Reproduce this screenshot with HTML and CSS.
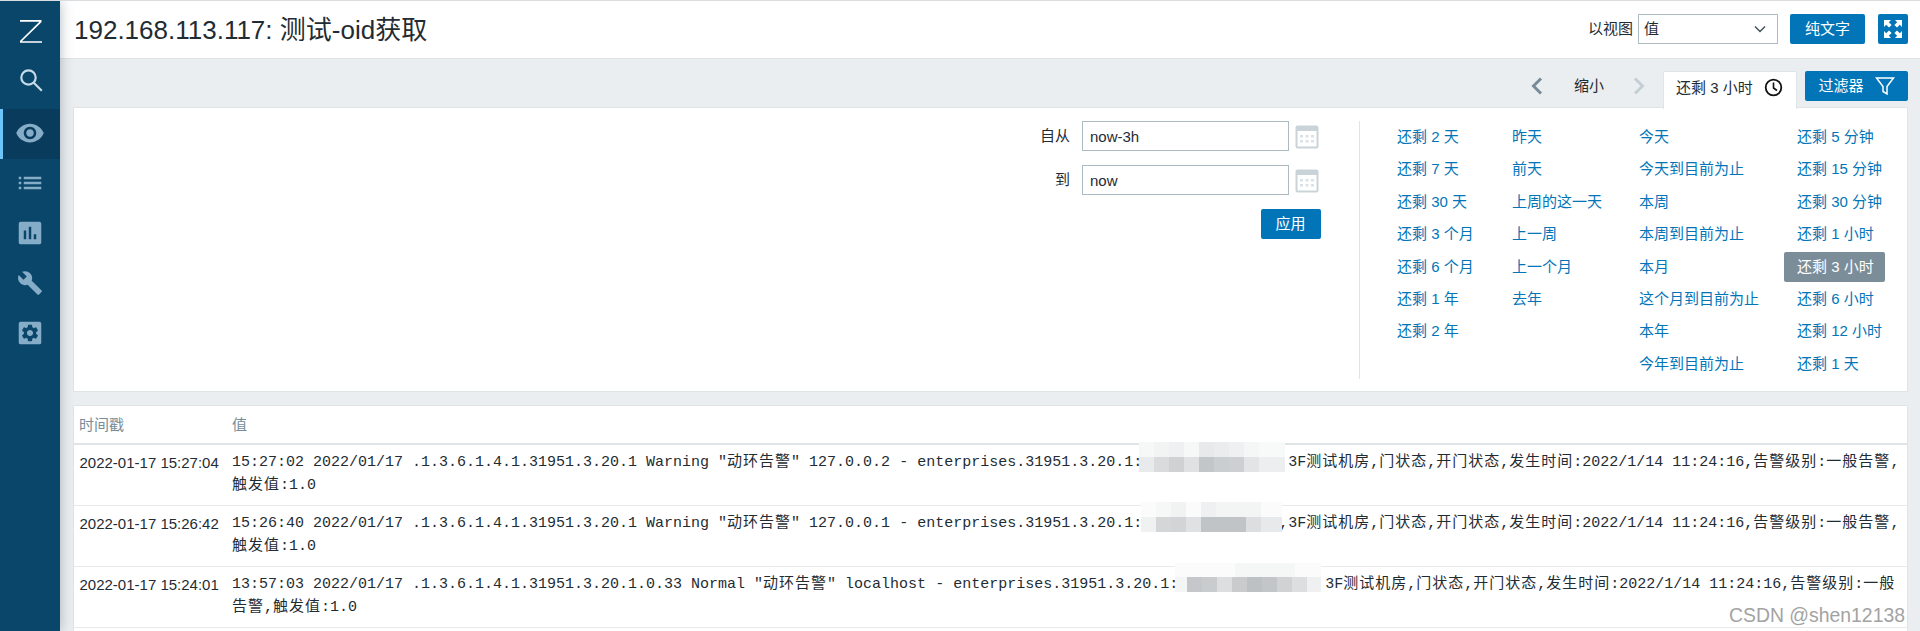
FILE: index.html
```html
<!DOCTYPE html>
<html lang="zh-CN">
<head>
<meta charset="utf-8">
<title>192.168.113.117: 测试-oid获取</title>
<link rel="stylesheet" href="styles.css">
</head>
<body>
<aside class="sidebar">
  <a class="nav-logo"><svg width="30" height="30" viewBox="0 0 30 30"><path d="M5 4.800H26.500M26 5.300L5.500 25.500M5 26H27" fill="none" stroke="#fff" stroke-width="1.700"/></svg></a>
  <a class="nav-search"><svg width="24" height="24" viewBox="0 0 24 24"><circle cx="9.500" cy="9.500" r="7.200" fill="none" stroke="#c6dbe8" stroke-width="2.200"/><path d="M14.500 14.500L22.800 22.800" fill="none" stroke="#c6dbe8" stroke-width="2.200"/></svg></a>
  <a class="nav-item active"><svg width="30" height="30" viewBox="0 0 24 24"><path d="M12 4.500C7 4.500 2.730 7.610 1 12c1.730 4.390 6 7.500 11 7.500s9.270-3.110 11-7.500c-1.730-4.390-6-7.500-11-7.500zM12 17c-2.760 0-5-2.240-5-5s2.240-5 5-5 5 2.240 5 5-2.240 5-5 5zm0-8c-1.660 0-3 1.340-3 3s1.340 3 3 3 3-1.340 3-3-1.340-3-3-3z"/></svg></a>
  <a class="nav-item"><svg width="30" height="30" viewBox="0 0 24 24"><path d="M3 13h2v-2H3v2zm0 4h2v-2H3v2zm0-8h2V7H3v2zm4 4h14v-2H7v2zm0 4h14v-2H7v2zM7 7v2h14V7H7z"/></svg></a>
  <a class="nav-item"><svg width="30" height="30" viewBox="0 0 24 24"><path d="M19.500 3h-15C3.700 3 3 3.700 3 4.500v15c0 .8.700 1.500 1.500 1.500h15c.8 0 1.500-.7 1.500-1.500v-15c0-.8-.7-1.500-1.500-1.500zM9 17H7v-7h2v7zm4 0h-2V7h2v10zm4 0h-2v-4h2v4z"/></svg></a>
  <a class="nav-item"><svg width="26" height="26" viewBox="0 0 24 24"><path d="M22.700 19l-9.100-9.100c.9-2.300.4-5-1.500-6.900-2-2-5-2.400-7.400-1.300L9 6 6 9 1.600 4.700C.4 7.100.9 10.100 2.900 12.100c1.900 1.900 4.600 2.400 6.900 1.500l9.100 9.100c.4.4 1 .4 1.400 0l2.300-2.300c.5-.4.5-1.100.1-1.400z"/></svg></a>
  <a class="nav-item"><svg width="30" height="30" viewBox="0 0 24 24"><rect x="3" y="3" width="18" height="18" rx="1.500"/><path class="gear" transform="translate(12 12) scale(.68) translate(-12 -12)" d="M19.140 12.940c.04-.3.06-.61.06-.94 0-.32-.02-.64-.07-.94l2.030-1.580c.18-.14.23-.41.12-.61l-1.920-3.320c-.12-.22-.37-.29-.59-.22l-2.390.96c-.5-.38-1.030-.7-1.620-.94l-.36-2.540c-.04-.24-.24-.41-.48-.41h-3.840c-.24 0-.43.17-.47.41l-.36 2.540c-.59.24-1.130.57-1.620.94l-2.390-.96c-.22-.08-.47 0-.59.22L2.740 8.870c-.12.21-.08.47.12.61l2.030 1.580c-.05.3-.09.63-.09.94s.02.64.07.94l-2.030 1.580c-.18.14-.23.41-.12.61l1.920 3.320c.12.22.37.29.59.22l2.390-.96c.5.38 1.030.7 1.620.94l.36 2.540c.05.24.24.41.48.41h3.840c.24 0 .44-.17.47-.41l.36-2.540c.59-.24 1.130-.56 1.620-.94l2.390.96c.22.08.47 0 .59-.22l1.920-3.320c.12-.22.07-.47-.12-.61l-2.010-1.580zM12 15.600c-1.980 0-3.600-1.620-3.600-3.600s1.620-3.600 3.600-3.600 3.600 1.620 3.600 3.600-1.620 3.600-3.600 3.600z"/></svg></a>
</aside>
<main class="main">
  <header class="header">
    <h1 class="title">192.168.113.117: 测试-oid获取</h1>
    <div class="controls">
      <span class="view-label">以视图</span>
      <div class="select"><span>值</span><svg width="12" height="8" viewBox="0 0 12 8"><path d="M1 1.500L6 6.500L11 1.500" fill="none" stroke="#3a4a52" stroke-width="1.300"/></svg></div>
      <button class="btn btn-text">纯文字</button>
      <button class="btn btn-full"><svg width="20" height="20" viewBox="0 0 20 20"><path d="M1 1h7L5.800 3.200 8.600 6 6 8.600 3.200 5.800 1 8zM19 1v7l-2.200-2.200L14 8.600 11.400 6 14.200 3.200 12 1zM1 19v-7l2.200 2.200L6 11.400 8.600 14 5.800 16.800 8 19zM19 19h-7l2.200-2.200L11.400 14 14 11.400l2.800 2.800L19 12z" fill="#fff"/></svg></button>
    </div>
  </header>
  <nav class="tabs">
    <svg class="chev" width="14" height="20" viewBox="0 0 14 20"><path d="M11 2.500L3.500 10L11 17.500" fill="none" stroke="#768d99" stroke-width="3"/></svg>
    <span class="zoom-out">缩小</span>
    <svg class="chev chev-next" width="14" height="20" viewBox="0 0 14 20"><path d="M3 2.500L10.500 10L3 17.500" fill="none" stroke="#c4cfd5" stroke-width="3"/></svg>
    <div class="tab"><span>还剩 3 小时</span><svg width="19" height="19" viewBox="0 0 19 19"><circle cx="9.500" cy="9.500" r="7.800" fill="none" stroke="#111" stroke-width="1.800"/><path d="M9.500 4.500V10L13 12.500" fill="none" stroke="#111" stroke-width="1.600"/></svg></div>
    <button class="btn btn-filter"><span>过滤器</span><svg width="20" height="20" viewBox="0 0 20 20"><path d="M1.500 2H18.500L12 10.500V18L8 15.500V10.500Z" fill="none" stroke="#fff" stroke-width="1.500"/></svg></button>
  </nav>
  <section class="panel filter">
    <div class="range">
      <div class="range-row">
        <label class="range-label">自从</label><input class="range-input" value="now-3h">
        <svg class="cal" width="24" height="24" viewBox="0 0 24 24"><rect x="0.500" y="0.500" width="23" height="23" rx="2" fill="#c9d3d8"/><rect x="2.500" y="6" width="19" height="15.500" fill="#fff"/><path d="M5 10h3v2.500H5zM10.500 10h3v2.500h-3zM16 10h3v2.500h-3zM5 15h3v2.500H5zM10.500 15h3v2.500h-3zM16 15h3v2.500h-3z" fill="#dbe2e6"/></svg>
      </div>
      <div class="range-row">
        <label class="range-label">到</label><input class="range-input" value="now">
        <svg class="cal" width="24" height="24" viewBox="0 0 24 24"><rect x="0.500" y="0.500" width="23" height="23" rx="2" fill="#c9d3d8"/><rect x="2.500" y="6" width="19" height="15.500" fill="#fff"/><path d="M5 10h3v2.500H5zM10.500 10h3v2.500h-3zM16 10h3v2.500h-3zM5 15h3v2.500H5zM10.500 15h3v2.500h-3zM16 15h3v2.500h-3z" fill="#dbe2e6"/></svg>
      </div>
      <div class="range-apply"><button class="btn btn-apply">应用</button></div>
    </div>
    <div class="quick">
      <ul class="col col-1">
        <li><a>还剩 2 天</a></li><li><a>还剩 7 天</a></li><li><a>还剩 30 天</a></li><li><a>还剩 3 个月</a></li><li><a>还剩 6 个月</a></li><li><a>还剩 1 年</a></li><li><a>还剩 2 年</a></li>
      </ul>
      <ul class="col col-2">
        <li><a>昨天</a></li><li><a>前天</a></li><li><a>上周的这一天</a></li><li><a>上一周</a></li><li><a>上一个月</a></li><li><a>去年</a></li>
      </ul>
      <ul class="col col-3">
        <li><a>今天</a></li><li><a>今天到目前为止</a></li><li><a>本周</a></li><li><a>本周到目前为止</a></li><li><a>本月</a></li><li><a>这个月到目前为止</a></li><li><a>本年</a></li><li><a>今年到目前为止</a></li>
      </ul>
      <ul class="col col-4">
        <li><a>还剩 5 分钟</a></li><li><a>还剩 15 分钟</a></li><li><a>还剩 30 分钟</a></li><li><a>还剩 1 小时</a></li><li><a class="selected">还剩 3 小时</a></li><li><a>还剩 6 小时</a></li><li><a>还剩 12 小时</a></li><li><a>还剩 1 天</a></li>
      </ul>
    </div>
  </section>
  <section class="panel results">
    <table class="table">
      <thead><tr><th class="c-time">时间戳</th><th>值</th></tr></thead>
      <tbody>
        <tr>
          <td>2022-01-17 15:27:04</td>
          <td class="mono">15:27:02 2022/01/17 .1.3.6.1.4.1.31951.3.20.1 Warning "<span class="cn">动环告警</span>" 127.0.0.2 - enterprises.31951.3.20.1:<span class="mask mask-1"><svg width="146" height="30" shape-rendering="crispEdges"><rect width="146" height="30" fill="#fafafa"/><g><rect x="0" width="15" height="15" fill="#f6f7f7"/><rect x="15" width="15" height="15" fill="#f2f3f3"/><rect x="30" width="15" height="15" fill="#eff0f1"/><rect x="45" width="15" height="15" fill="#f6f7f7"/><rect x="60" width="15" height="15" fill="#e8e9ea"/><rect x="75" width="15" height="15" fill="#ebeced"/><rect x="90" width="15" height="15" fill="#eff0f1"/><rect x="105" width="15" height="15" fill="#f5f6f6"/><rect x="120" width="26" height="15" fill="#f8f9f9"/><rect x="0" y="15" width="15" height="15" fill="#e9eaeb"/><rect x="15" y="15" width="15" height="15" fill="#d9dbdc"/><rect x="30" y="15" width="15" height="15" fill="#cfd1d3"/><rect x="45" y="15" width="15" height="15" fill="#dfe1e2"/><rect x="60" y="15" width="15" height="15" fill="#c3c6c8"/><rect x="75" y="15" width="15" height="15" fill="#cbced0"/><rect x="90" y="15" width="15" height="15" fill="#cdd0d2"/><rect x="105" y="15" width="15" height="15" fill="#e2e4e5"/><rect x="120" y="15" width="26" height="15" fill="#eceeef"/></g></svg></span>,3F<span class="cn">测试机房</span>,<span class="cn">门状态</span>,<span class="cn">开门状态</span>,<span class="cn">发生时间</span>:2022/1/14 11:24:16,<span class="cn">告警级别</span>:<span class="cn">一般告警</span>,<br><span class="cn">触发值</span>:1.0</td>
        </tr>
        <tr>
          <td>2022-01-17 15:26:42</td>
          <td class="mono">15:26:40 2022/01/17 .1.3.6.1.4.1.31951.3.20.1 Warning "<span class="cn">动环告警</span>" 127.0.0.1 - enterprises.31951.3.20.1:<span class="mask mask-2"><svg width="141" height="30" shape-rendering="crispEdges"><rect width="141" height="30" fill="#fbfbfb"/><rect x="15" width="15" height="15" fill="#f6f7f7"/><rect x="30" width="15" height="15" fill="#f1f2f2"/><rect x="60" width="15" height="15" fill="#eff0f1"/><rect x="75" width="45" height="15" fill="#f3f4f4"/><rect x="0" y="15" width="15" height="15" fill="#f0f1f1"/><rect x="15" y="15" width="15" height="15" fill="#d4d6d8"/><rect x="30" y="15" width="15" height="15" fill="#d2d4d6"/><rect x="45" y="15" width="15" height="15" fill="#dfe1e2"/><rect x="60" y="15" width="45" height="15" fill="#c1c4c6"/><rect x="105" y="15" width="15" height="15" fill="#dcdedf"/><rect x="120" y="15" width="21" height="15" fill="#e8e9ea"/></svg></span>,3F<span class="cn">测试机房</span>,<span class="cn">门状态</span>,<span class="cn">开门状态</span>,<span class="cn">发生时间</span>:2022/1/14 11:24:16,<span class="cn">告警级别</span>:<span class="cn">一般告警</span>,<br><span class="cn">触发值</span>:1.0</td>
        </tr>
        <tr>
          <td>2022-01-17 15:24:01</td>
          <td class="mono">13:57:03 2022/01/17 .1.3.6.1.4.1.31951.3.20.1.0.33 Normal "<span class="cn">动环告警</span>" localhost - enterprises.31951.3.20.1:<span class="mask mask-3"><svg width="146" height="29" shape-rendering="crispEdges"><rect width="146" height="29" fill="#fbfbfb"/><rect x="60" width="60" height="14" fill="#f5f6f6"/><rect x="0" y="14" width="12" height="15" fill="#f4f5f5"/><rect x="12" y="14" width="15" height="15" fill="#c5c8ca"/><rect x="27" y="14" width="15" height="15" fill="#c9cccd"/><rect x="42" y="14" width="15" height="15" fill="#dcdedf"/><rect x="57" y="14" width="15" height="15" fill="#c9cbcd"/><rect x="72" y="14" width="15" height="15" fill="#bec1c3"/><rect x="87" y="14" width="15" height="15" fill="#c3c6c8"/><rect x="102" y="14" width="15" height="15" fill="#d0d2d4"/><rect x="117" y="14" width="15" height="15" fill="#dcdedf"/><rect x="132" y="14" width="14" height="15" fill="#eff0f1"/></svg></span>3F<span class="cn">测试机房</span>,<span class="cn">门状态</span>,<span class="cn">开门状态</span>,<span class="cn">发生时间</span>:2022/1/14 11:24:16,<span class="cn">告警级别</span>:<span class="cn">一般</span><br><span class="cn">告警</span>,<span class="cn">触发值</span>:1.0</td>
        </tr>
      </tbody>
    </table>
    <div class="watermark">CSDN @shen12138</div>
  </section>
</main>
</body>
</html>
```
FILE: styles.css
```css
* { box-sizing: border-box; }
html, body { margin: 0; height: 100%; overflow: hidden; }
body {
  display: flex;
  background: #ebeef0;
  color: #1f2c33;
  font: 15px/1.2 "Liberation Sans", "Noto Sans CJK SC", sans-serif;
  border-top: 1px solid #d9dde0;
}
a { color: inherit; text-decoration: none; }
ul { list-style: none; margin: 0; padding: 0; }
button { font: inherit; border: 0; padding: 0; }

.sidebar {
  flex: 0 0 60px;
  background: #0a466a;
  box-shadow: 0 0 12px rgba(40, 60, 75, .35);
  position: relative;
  z-index: 2;
  display: flex;
  flex-direction: column;
}
.sidebar a { display: flex; align-items: center; justify-content: center; }
.nav-logo { height: 49px; padding-top: 10px; }
.nav-search { height: 59px; padding-left: 1px; padding-top: 1px; }
.nav-item { height: 50px; padding-bottom: 3px; }
.nav-item svg { fill: #86adc8; }
.nav-item .gear { fill: #0a466a; }
.nav-item.active { background: #093c5c; border-left: 3px solid #6cc4fb; padding-right: 3px; }

.main { flex: 1; min-width: 0; display: flex; flex-direction: column; }

.header {
  height: 58px;
  flex: none;
  background: #fff;
  border-bottom: 1px solid #dfe4e7;
  display: flex;
  justify-content: space-between;
  align-items: flex-start;
  padding: 0 12px 0 14px;
}
.title { margin: 0; font-size: 26px; font-weight: 400; line-height: 59px; color: #1f2c33; }
.controls { display: flex; align-items: center; height: 30px; margin-top: 13px; }
.view-label { margin-right: 5px; }
.select {
  width: 140px;
  height: 30px;
  border: 1px solid #acbbc2;
  display: flex;
  align-items: center;
  justify-content: space-between;
  padding: 0 11px 0 5px;
  margin-right: 12px;
}
.btn { background: #0275b8; color: #fff; border-radius: 2px; height: 30px; display: flex; align-items: center; justify-content: center; }
.btn-text { width: 75px; margin-right: 13px; }
.btn-full { width: 30px; }

.tabs {
  height: 48px;
  flex: none;
  display: flex;
  justify-content: flex-end;
  align-items: flex-start;
  padding: 12px 12px 0 0;
  position: relative;
  z-index: 1;
}
.chev { margin-top: 5px; }
.zoom-out { line-height: 30px; width: 31px; margin: 0 27px 0 30px; white-space: nowrap; }
.chev-next { margin-right: 17px; }
.tab {
  width: 134px;
  height: 38px;
  margin-bottom: -2px;
  background: #fff;
  border: 1px solid #dfe4e7;
  border-bottom: 0;
  border-radius: 2px 2px 0 0;
  display: flex;
  align-items: flex-start;
  padding: 6px 0 0 12px;
  line-height: 19px;
  white-space: nowrap;
}
.tab svg { margin-left: 11px; }
.btn-filter { width: 103px; margin-left: 8px; gap: 11px; }

.panel { background: #fff; border: 1px solid #dfe4e7; margin: 0 12px 0 13px; }
.filter {
  flex: none;
  height: 285px;
  display: flex;
  justify-content: flex-end;
  padding: 13px 0 12px;
}
.range { width: 322px; padding-right: 40px; }
.range-row { display: flex; align-items: flex-start; height: 44px; }
.range-label { width: 76px; padding-right: 12px; text-align: right; line-height: 30px; }
.range-input {
  width: 207px;
  height: 30px;
  border: 1px solid #acbbc2;
  padding: 0 7px;
  font: inherit;
  color: #1f2c33;
  margin: 0;
  border-radius: 0;
}
.cal { margin: 4px 0 0 6px; flex: none; }
.range-apply { display: flex; justify-content: flex-end; }
.btn-apply { width: 60px; margin-right: -1.5px; }

.quick {
  width: 548px;
  border-left: 1px solid #dfe4e7;
  display: flex;
  padding: 1px 0 0 37px;
}
.col li { height: 32.4px; white-space: nowrap; }
.col a { color: #0275b8; display: inline-block; height: 30px; line-height: 30px; }
.col-1 { width: 115px; }
.col-2 { width: 127px; }
.col-3 { width: 158px; }
.col a.selected { background: #7b8d99; color: #fff; border-radius: 2px; margin-left: -13px; padding: 0 13px; width: 101px; }

.results {
  flex: 1;
  margin-top: 13px;
  margin-bottom: -2px;
  position: relative;
  overflow: hidden;
}
.table { border-collapse: collapse; table-layout: fixed; width: 100%; }
.table th {
  height: 38px;
  text-align: left;
  font-weight: 400;
  color: #768d99;
  padding: 0 5px;
  border-bottom: 2px solid #dfe4e7;
}
.c-time { width: 153px; }
.table td {
  height: 61px;
  padding: 6px 0 0 5.5px;
  vertical-align: top;
  line-height: 23px;
  white-space: nowrap;
  border-bottom: 1px solid #e6eaec;
}
.table td.mono { font-family: "Liberation Mono", "Noto Sans CJK SC", monospace; padding-left: 5px; }
.cn { letter-spacing: 1px; }
.mask { display: inline-block; position: relative; height: 23px; vertical-align: top; }
.mask svg { position: absolute; display: block; }
.mask-1 { width: 137px; }
.mask-1 svg { top: -9px; left: -3px; }
.mask-2 { width: 137px; }
.mask-2 svg { top: -10px; left: -1px; }
.mask-3 { width: 147px; }
.mask-3 svg { top: -10px; left: -3px; }

.watermark {
  position: absolute;
  right: 2px;
  bottom: 5px;
  font-size: 19.4px;
  line-height: 24px;
  color: #a3a3a3;
}
```
